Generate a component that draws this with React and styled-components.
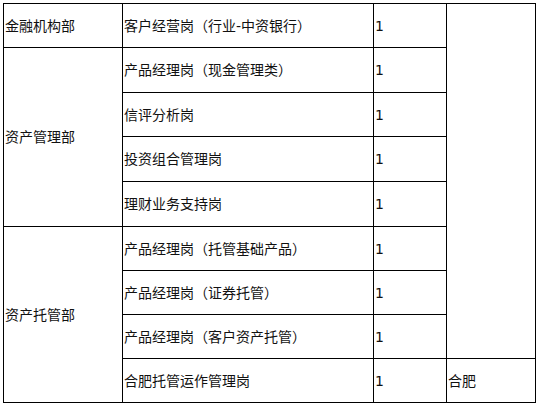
import React from "react";
import styled, { createGlobalStyle } from "styled-components";

const GlobalStyle = createGlobalStyle`
  html, body {
    margin: 0;
    padding: 0;
    background: #fff;
  }
  body {
    padding: 3px;
    font-family: "DejaVu Sans", "Noto Sans CJK SC", sans-serif;
  }
`;

// black background + 1px gaps draws the table rules
const Table = styled.div`
  display: grid;
  grid-template-columns: 118px 250px 72px 88px;
  grid-template-rows: 43px 44px 43px 44px 44px 43px 43px 43px 43px;
  gap: 1px;
  padding: 1px;
  width: max-content;
  background: #000;
`;

const Cell = styled.div`
  display: flex;
  align-items: center;
  padding-left: 1px;
  background: #fff;
  color: #111;
  font-size: 14px;
  line-height: 1;
  white-space: nowrap;
  grid-column: ${(p) => p.col};
  grid-row: ${(p) => p.row || "auto"};
`;

const rows = [
  { job: "客户经营岗（行业-中资银行）" },
  { job: "产品经理岗（现金管理类）" },
  { job: "信评分析岗" },
  { job: "投资组合管理岗" },
  { job: "理财业务支持岗" },
  { job: "产品经理岗（托管基础产品）" },
  { job: "产品经理岗（证券托管）" },
  { job: "产品经理岗（客户资产托管）" },
  { job: "合肥托管运作管理岗" },
];

const depts = [
  { name: "金融机构部", row: "1 / 2" },
  { name: "资产管理部", row: "2 / 6" },
  { name: "资产托管部", row: "6 / 10" },
];

export default function App() {
  return (
    <>
      <GlobalStyle />
      <Table>
        {depts.map((d) => (
          <Cell key={d.name} col="1" row={d.row}>
            {d.name}
          </Cell>
        ))}
        {rows.map((r, i) => (
          <React.Fragment key={i}>
            <Cell col="2" row={`${i + 1}`}>{r.job}</Cell>
            <Cell col="3" row={`${i + 1}`}>1</Cell>
          </React.Fragment>
        ))}
        <Cell col="4" row="1 / 9" />
        <Cell col="4" row="9 / 10">合肥</Cell>
      </Table>
    </>
  );
}
